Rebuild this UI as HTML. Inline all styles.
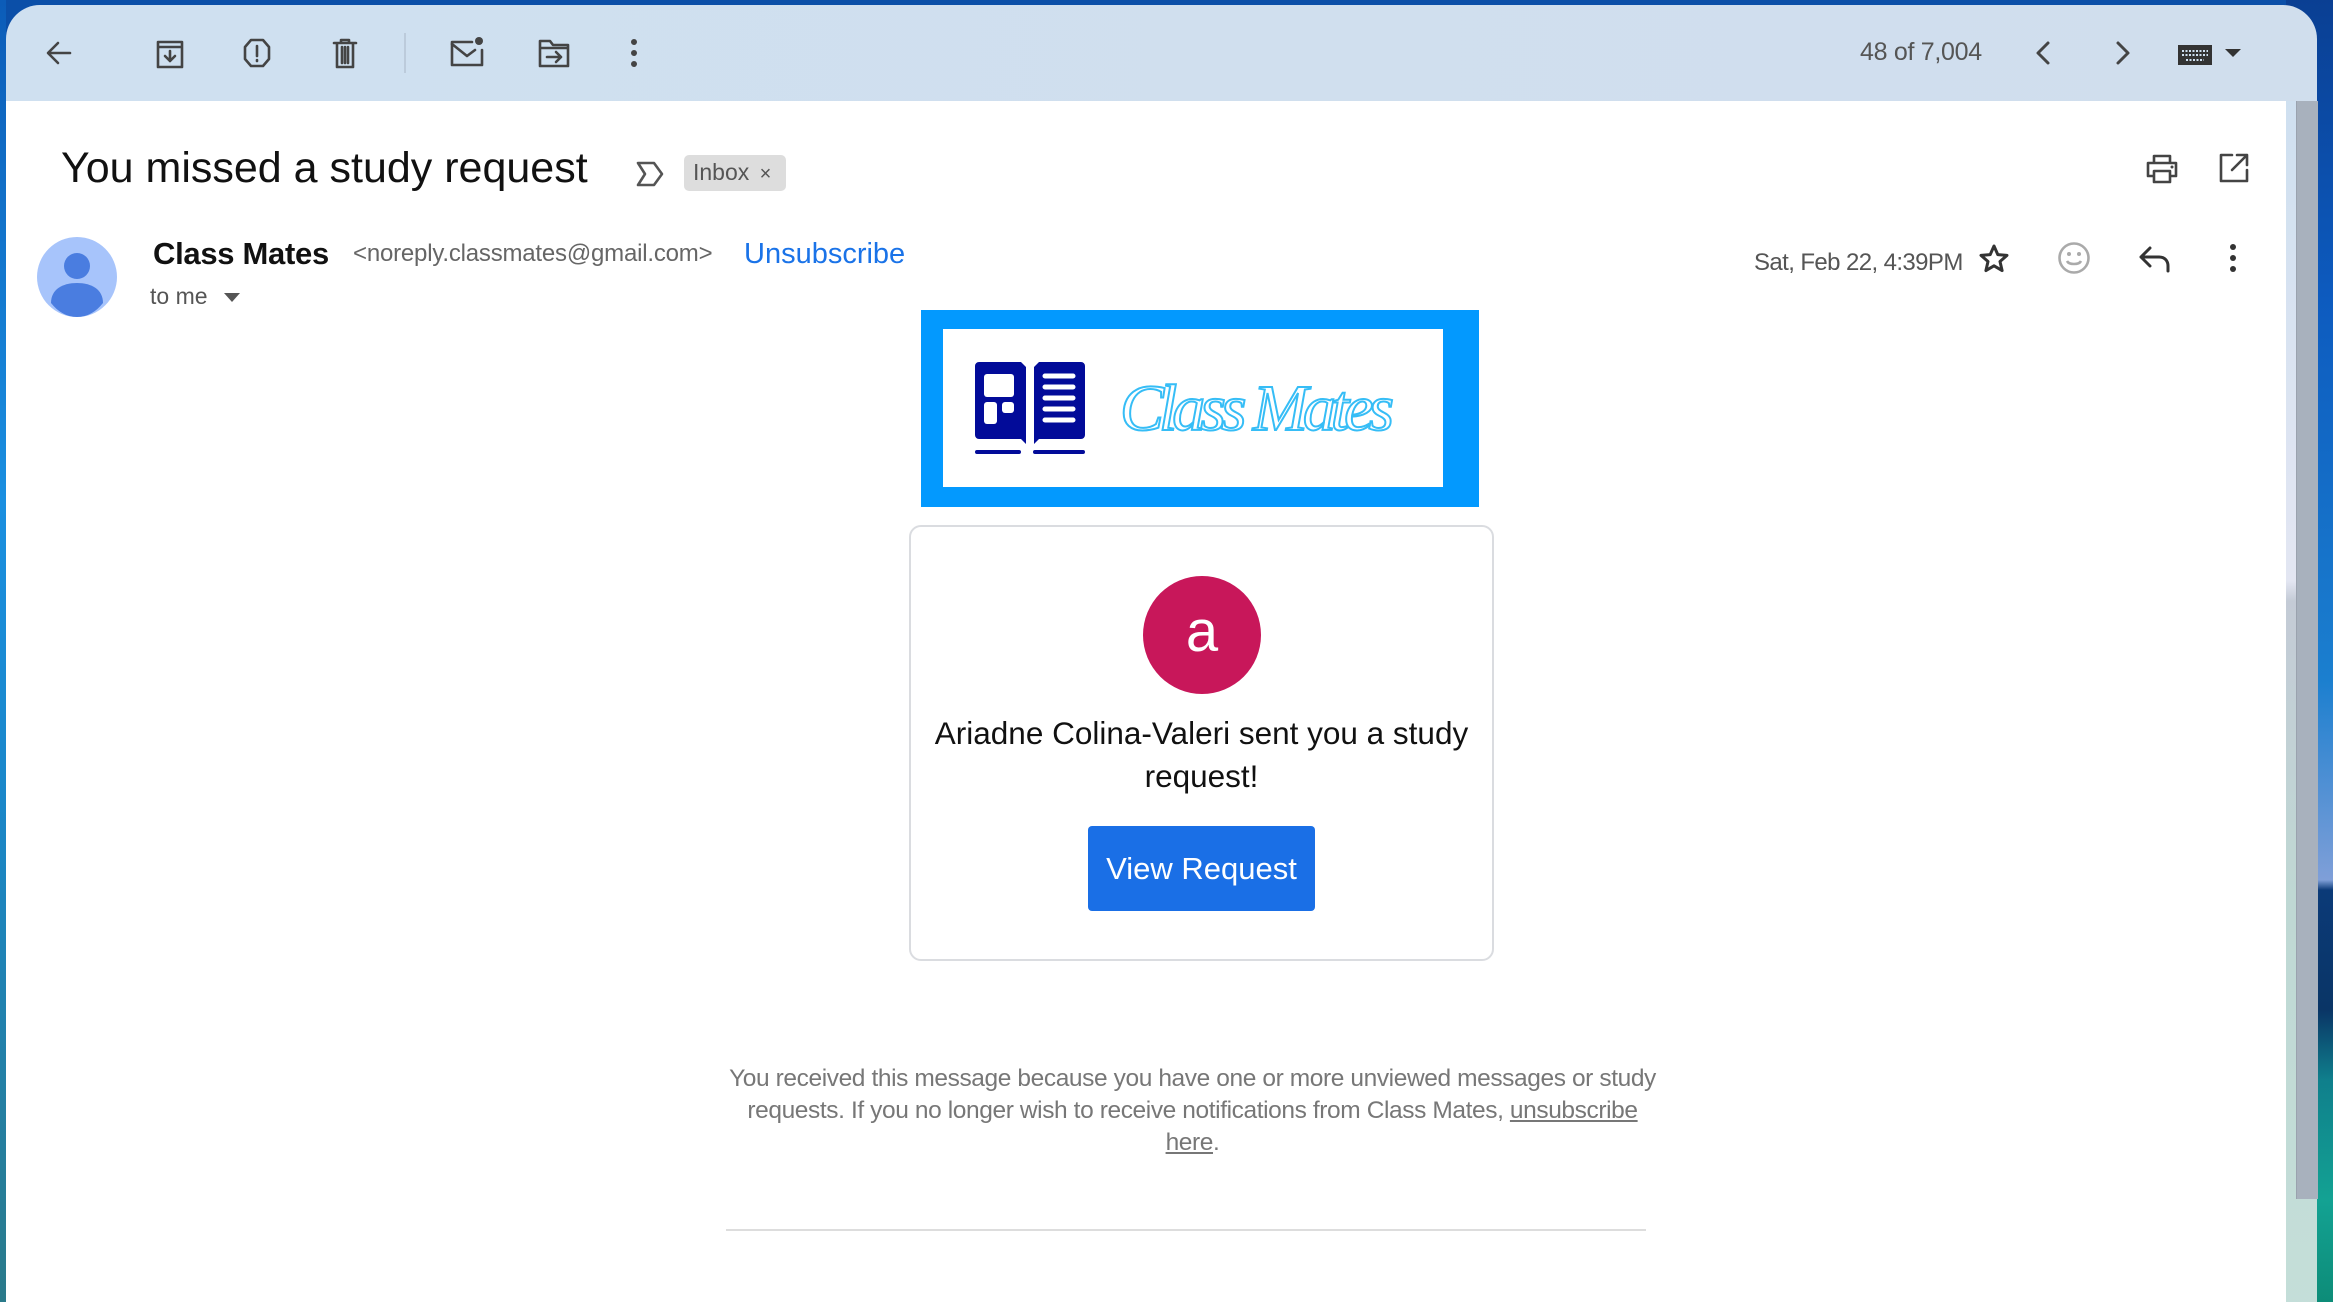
<!DOCTYPE html>
<html><head><meta charset="utf-8"><style>
*{margin:0;padding:0;box-sizing:border-box}
body{width:2333px;height:1302px;overflow:hidden;position:relative;font-family:"Liberation Sans",sans-serif;background:#0b4fa8}
.abs{position:absolute}
.sea{left:2286px;top:0;width:47px;height:1302px;background:linear-gradient(180deg,#0a3f93 0px,#0d5bbf 300px,#1b7fcf 680px,#7f9fd8 880px,#0b3a78 890px,#0a3566 1010px,#0f7f8c 1080px,#13a293 1200px,#0d8c78 1302px)}
.left{left:0;top:0;width:6px;height:1302px;background:linear-gradient(180deg,#0c5cb8,#1a8fe0 500px,#1a87c9 800px,#2a7a8a 1302px)}
.tb{left:6px;top:5px;width:2311px;height:96px;background:linear-gradient(90deg,#cfe0f0,#d0deed);border-radius:34px 34px 0 0}
.main{left:6px;top:101px;width:2280px;height:1201px;background:#fff}
.track{left:2286px;top:101px;width:31px;height:1201px;background:linear-gradient(180deg,#cfe0f0,#e3e6f2 480px,#c4cbd6 500px,#bfd8d4 800px,#c6e0da 1302px)}
.thumb{left:2296px;top:101px;width:22px;height:1098px;background:#a8b1bd;border-left:1px solid #9aa2ae}
svg{position:absolute;overflow:visible}
.ic{fill:none;stroke:#444;stroke-width:2.6;stroke-linecap:round;stroke-linejoin:round}
</style></head><body>
<div class="abs sea"></div>
<div class="abs left"></div>
<div class="abs tb"></div>
<div class="abs main"></div>
<div class="abs track"></div>
<div class="abs thumb"></div>

<svg style="left:44px;top:38px" width="30" height="30" viewBox="0 0 30 30"><path class="ic" d="M26 15H5M14 5L4 15l10 10"/></svg>
<svg style="left:155px;top:37px" width="30" height="32" viewBox="0 0 30 32"><path class="ic" d="M3 5h24v25H3zM3 10h24M15 14v10M10 19l5 5 5-5"/></svg>
<svg style="left:242px;top:37px" width="30" height="32" viewBox="0 0 30 32"><path class="ic" d="M9 3h12l6 7v12l-6 7H9l-6-7V10z"/><path class="ic" d="M15 9v10M15 23v1"/></svg>
<svg style="left:331px;top:37px" width="28" height="32" viewBox="0 0 28 32"><path class="ic" d="M3 6h22M10 6V3h8v3M6 6v24h16V6M11 10v16M14 10v16M17 10v16"/></svg>
<div class="abs" style="left:404px;top:33px;width:2px;height:40px;background:#bccbdb"></div>
<svg style="left:449px;top:36px" width="36" height="32" viewBox="0 0 36 32"><path class="ic" d="M23 6H3v23h30V14"/><path class="ic" d="M3 8l15 12 8-6"/><circle cx="30" cy="5" r="4" fill="#444"/></svg>
<svg style="left:537px;top:38px" width="34" height="30" viewBox="0 0 34 30"><path class="ic" d="M3 3h10l3 4h15v21H3zM3 10h28M10 19h14M19 14l5 5-5 5"/></svg>
<svg style="left:628px;top:38px" width="12" height="30" viewBox="0 0 12 30"><circle cx="6" cy="4" r="3" fill="#444"/><circle cx="6" cy="15" r="3" fill="#444"/><circle cx="6" cy="26" r="3" fill="#444"/></svg>

<div class="abs" style="left:1860px;top:38px;font-size:25px;color:#555;letter-spacing:-0.3px">48 of 7,004</div>
<svg style="left:2035px;top:40px" width="16" height="26" viewBox="0 0 16 26"><path class="ic" style="stroke-width:3" d="M13 3L3 13l10 10"/></svg>
<svg style="left:2115px;top:40px" width="16" height="26" viewBox="0 0 16 26"><path class="ic" style="stroke-width:3" d="M3 3l10 10-10 10"/></svg>
<svg style="left:2178px;top:43px" width="72" height="24" viewBox="0 0 72 24"><rect x="0" y="2" width="34" height="20" fill="#333"/><path d="M4 8h26M4 12h26M8 17h18" stroke="#cfe0f0" stroke-width="2" stroke-dasharray="2 1.5"/><path d="M47 6h16l-8 8z" fill="#333"/></svg>

<div class="abs" style="left:61px;top:144px;font-size:43px;color:#111;letter-spacing:0px">You missed a study request</div>
<svg style="left:635px;top:160px" width="30" height="28" viewBox="0 0 30 28"><path class="ic" style="stroke:#555" d="M3 3h16l8 11-8 11H3l7-11z"/></svg>
<div class="abs" style="left:684px;top:155px;width:102px;height:36px;background:#dddddd;border-radius:5px;font-size:23px;color:#555;padding:4px 0 0 9px">Inbox <span style="font-size:20px;margin-left:4px">×</span></div>
<svg style="left:2145px;top:153px" width="34" height="32" viewBox="0 0 34 32"><path class="ic" d="M9 10V3h16v7M9 23H3V10h28v13h-6M9 18h16v11H9z"/><circle cx="27" cy="14" r="1.5" fill="#444"/></svg>
<svg style="left:2218px;top:152px" width="32" height="32" viewBox="0 0 32 32"><path class="ic" d="M14 3H3v26h26V18M19 3h10v10M29 3L14 18"/></svg>

<svg style="left:37px;top:237px" width="80" height="80" viewBox="0 0 80 80"><circle cx="40" cy="40" r="40" fill="#a7c4fb"/><circle cx="40" cy="29" r="13" fill="#4a7de0"/><path d="M14 66c0-14 12-20 26-20s26 6 26 20c-7 9-16 14-26 14s-19-5-26-14z" fill="#4a7de0"/></svg>
<div class="abs" style="left:153px;top:236px;font-size:31px;font-weight:bold;color:#111;letter-spacing:-0.3px">Class Mates</div>
<div class="abs" style="left:353px;top:240px;font-size:24px;color:#666;letter-spacing:-0.2px">&lt;noreply.classmates@gmail.com&gt;</div>
<div class="abs" style="left:744px;top:238px;font-size:29px;color:#1a73e8;letter-spacing:0px">Unsubscribe</div>
<div class="abs" style="left:150px;top:283px;font-size:23px;color:#555">to me</div>
<svg style="left:224px;top:293px" width="16" height="10" viewBox="0 0 16 10"><path d="M0 0h16L8 9z" fill="#555"/></svg>
<div class="abs" style="left:1754px;top:249px;font-size:24px;color:#555;letter-spacing:-0.6px">Sat, Feb 22, 4:39PM</div>
<svg style="left:1978px;top:243px" width="32" height="32" viewBox="0 0 32 32"><path class="ic" style="stroke:#333;stroke-width:3" d="M16 3l3.8 8.6 9.2.8-7 6.1 2.1 9.1L16 22.8l-8.1 4.8 2.1-9.1-7-6.1 9.2-.8z"/></svg>
<svg style="left:2057px;top:241px" width="34" height="34" viewBox="0 0 34 34"><circle cx="17" cy="17" r="14.5" fill="none" stroke="#aaa" stroke-width="2.6"/><circle cx="12" cy="13" r="2" fill="#aaa"/><circle cx="22" cy="13" r="2" fill="#aaa"/><path d="M10 20c2 4 12 4 14 0" fill="none" stroke="#aaa" stroke-width="2.6"/></svg>
<svg style="left:2138px;top:245px" width="34" height="30" viewBox="0 0 34 30"><path class="ic" style="stroke:#333;stroke-width:3" d="M12 3L3 12l9 9M3 12h18c6 0 9 4 9 9v5"/></svg>
<svg style="left:2227px;top:243px" width="12" height="30" viewBox="0 0 12 30"><circle cx="6" cy="4" r="3" fill="#333"/><circle cx="6" cy="15" r="3" fill="#333"/><circle cx="6" cy="26" r="3" fill="#333"/></svg>

<div class="abs" style="left:921px;top:310px;width:558px;height:197px;background:#0399fe"></div>
<div class="abs" style="left:943px;top:329px;width:500px;height:158px;background:#fff"></div>
<svg style="left:975px;top:362px" width="110" height="94" viewBox="0 0 110 94"><path d="M4 0h42l5 5v77l-5-5H4a4 4 0 0 1-4-4V4a4 4 0 0 1 4-4zM64 0h42a4 4 0 0 1 4 4v69a4 4 0 0 1-4 4H64l-5 5V5z" fill="#020b99"/><rect x="9" y="12" width="30" height="23" rx="3" fill="#fff"/><rect x="9" y="40" width="13" height="22" rx="3" fill="#fff"/><rect x="27" y="40" width="12" height="11" rx="3" fill="#fff"/><path d="M70 14h28M70 25h28M70 36h28M70 47h28M70 58h28" stroke="#fff" stroke-width="5" stroke-linecap="round"/><path d="M2 90h42M60 90h48" stroke="#020b99" stroke-width="4" stroke-linecap="round"/></svg>
<svg style="left:1120px;top:360px" width="290" height="90" viewBox="0 0 290 90"><text x="0" y="70" font-family="Liberation Serif,serif" font-style="italic" font-size="66" fill="none" stroke="#36bdf6" stroke-width="2" letter-spacing="6" textLength="280">Class Mates</text></svg>

<div class="abs" style="left:909px;top:525px;width:585px;height:436px;border:2px solid #dadce0;border-radius:12px;background:#fff"></div>
<div class="abs" style="left:1143px;top:576px;width:118px;height:118px;border-radius:50%;background:#c8175a;color:#fff;font-size:58px;text-align:center;line-height:112px">a</div>
<div class="abs" style="left:859px;top:712px;width:685px;text-align:center;font-size:31.5px;line-height:43px;color:#111">Ariadne Colina-Valeri sent you a study<br>request!</div>
<div class="abs" style="left:1088px;top:826px;width:227px;height:85px;background:#1a6fe6;border-radius:4px;color:#fff;font-size:31px;text-align:center;line-height:85px">View Request</div>

<div class="abs" style="left:650px;top:1063px;width:1085px;text-align:center;font-size:24.5px;line-height:32px;color:#777;letter-spacing:-0.4px">You received this message because you have one or more unviewed messages or study<br>requests. If you no longer wish to receive notifications from Class Mates, <u>unsubscribe</u><br><u>here</u>.</div>
<div class="abs" style="left:726px;top:1229px;width:920px;height:2px;background:#ddd"></div>
</body></html>
